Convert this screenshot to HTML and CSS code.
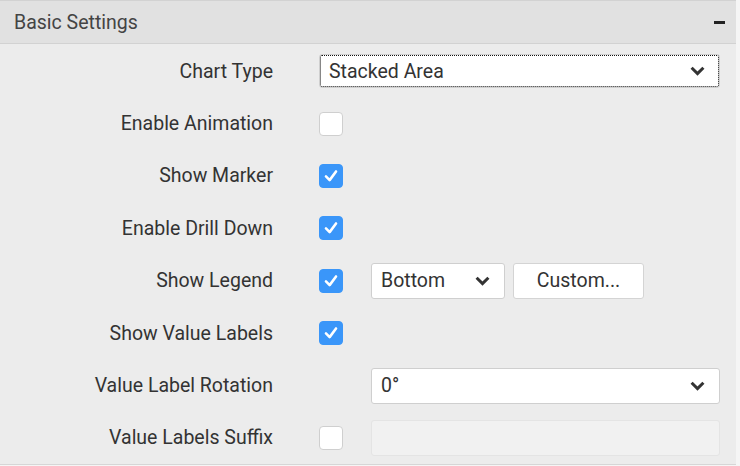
FILE: index.html
```html
<!DOCTYPE html>
<html>
<head>
<meta charset="utf-8">
<link rel="stylesheet" href="styles.css">
</head>
<body>
<div class="panel">
  <div class="header">
    <span class="title">Basic Settings</span>
    <span class="collapse"></span>
  </div>
  <div class="form">
    <div class="label">Chart Type</div>
    <div class="ctrl">
      <div class="select wide focused"><span>Stacked Area</span><svg class="chev" viewBox="0 0 14 9"><path d="M1.5 1.5 L7 7 L12.5 1.5" fill="none" stroke="#333" stroke-width="2.8"/></svg></div>
    </div>

    <div class="label">Enable Animation</div>
    <div class="ctrl"><span class="cb"></span></div>

    <div class="label">Show Marker</div>
    <div class="ctrl"><span class="cb on"><svg viewBox="0 0 24 24"><path d="M6.5 12.5 L10.5 16.5 L17.5 7" fill="none" stroke="#fff" stroke-width="2.8" stroke-linecap="round" stroke-linejoin="round"/></svg></span></div>

    <div class="label">Enable Drill Down</div>
    <div class="ctrl"><span class="cb on"><svg viewBox="0 0 24 24"><path d="M6.5 12.5 L10.5 16.5 L17.5 7" fill="none" stroke="#fff" stroke-width="2.8" stroke-linecap="round" stroke-linejoin="round"/></svg></span></div>

    <div class="label">Show Legend</div>
    <div class="ctrl">
      <span class="cb on"><svg viewBox="0 0 24 24"><path d="M6.5 12.5 L10.5 16.5 L17.5 7" fill="none" stroke="#fff" stroke-width="2.8" stroke-linecap="round" stroke-linejoin="round"/></svg></span>
      <div class="select small"><span>Bottom</span><svg class="chev" viewBox="0 0 14 9"><path d="M1.5 1.5 L7 7 L12.5 1.5" fill="none" stroke="#333" stroke-width="2.8"/></svg></div>
      <div class="button">Custom...</div>
    </div>

    <div class="label">Show Value Labels</div>
    <div class="ctrl"><span class="cb on"><svg viewBox="0 0 24 24"><path d="M6.5 12.5 L10.5 16.5 L17.5 7" fill="none" stroke="#fff" stroke-width="2.8" stroke-linecap="round" stroke-linejoin="round"/></svg></span></div>

    <div class="label">Value Label Rotation</div>
    <div class="ctrl">
      <span class="cb-space"></span>
      <div class="select grow"><span>0°</span><svg class="chev" viewBox="0 0 14 9"><path d="M1.5 1.5 L7 7 L12.5 1.5" fill="none" stroke="#333" stroke-width="2.8"/></svg></div>
    </div>

    <div class="label">Value Labels Suffix</div>
    <div class="ctrl">
      <span class="cb"></span>
      <div class="input grow"></div>
    </div>
  </div>
</div>
</body>
</html>
```

FILE: styles.css
```css
* { box-sizing: border-box; }
html, body { margin: 0; padding: 0; }
body {
  background: #f5f5f5;
  font-family: Roboto, "Liberation Sans", sans-serif;
  color: #333;
  width: 740px;
  height: 466px;
  overflow: hidden;
}
.panel {
  width: 736px;
  height: 465px;
  background: #ececec;
  border-bottom: 1px solid #d6d6d6;
}
.header {
  height: 44px;
  background: #e1e1e1;
  border-top: 1px solid #d2d2d2;
  border-bottom: 1px solid #d2d2d2;
  display: flex;
  align-items: center;
  justify-content: space-between;
  padding: 0 11px 0 14px;
}
.title {
  font-size: 19.5px;
  color: #444;
}
.collapse {
  width: 11px;
  height: 3px;
  background: #222;
}
.form {
  display: grid;
  grid-template-columns: 273px 1fr;
  column-gap: 46px;
  grid-auto-rows: 52.4px;
  padding-top: 1px;
  padding-right: 16px;
}
.label {
  font-size: 19.5px;
  text-align: right;
  display: flex;
  align-items: center;
  justify-content: flex-end;
  color: #333;
}
.ctrl {
  display: flex;
  align-items: center;
}
.cb, .cb-space {
  width: 24px;
  height: 24px;
  flex: none;
  margin-right: 28px;
}
.cb {
  background: #fff;
  border: 1px solid #cfcfcf;
  border-radius: 4px;
  display: flex;
}
.cb.on {
  background: #3a96f9;
  border-color: #3a96f9;
}
.cb svg { width: 22px; height: 22px; }
.select {
  background: #fff;
  border: 1px solid #cfcfcf;
  border-radius: 3px;
  height: 36px;
  display: flex;
  align-items: center;
  justify-content: space-between;
  padding: 0 14px 0 9px;
  font-size: 19.5px;
  color: #333;
}
.select.wide { width: 401px; height: 34px; }
.select.focused {
  outline: 1px dotted #111;
  outline-offset: -2px;
}
.select.small { width: 134px; }
.grow { flex: 1; }
.chev { width: 15px; height: 10px; }
.button {
  margin-left: 8px;
  width: 131px;
  height: 36px;
  background: #fff;
  border: 1px solid #d4d4d4;
  border-radius: 3px;
  display: flex;
  align-items: center;
  justify-content: center;
  font-size: 19.5px;
  color: #333;
}
.input {
  height: 36px;
  background: #f1f1f1;
  border: 1px solid #e4e4e4;
  border-radius: 3px;
}
```
